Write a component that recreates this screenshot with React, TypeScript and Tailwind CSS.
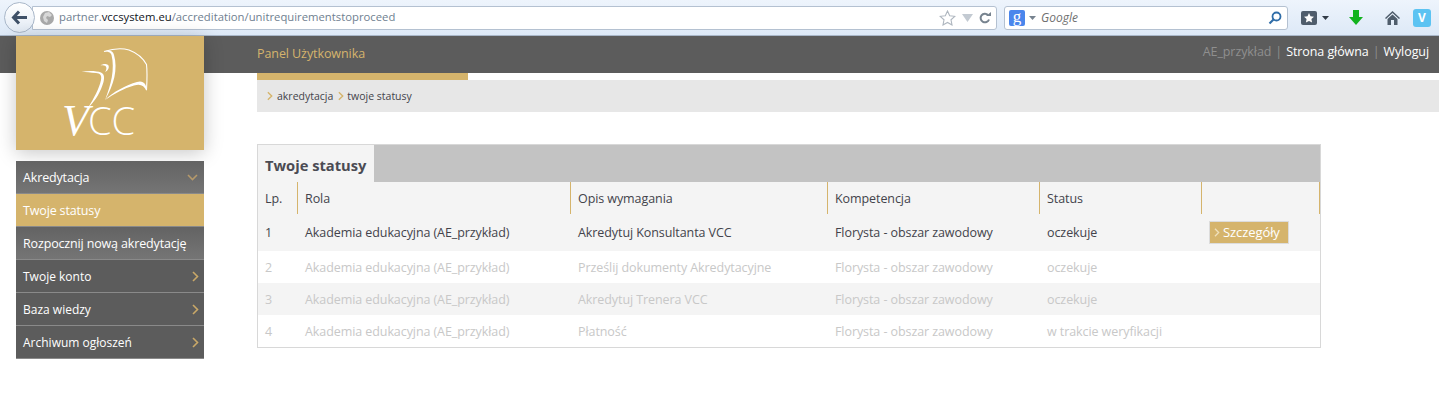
import React from "react";

const grid = "grid grid-cols-[39px_273px_257px_212px_162px_119px]";
const body = "text-[12.5px] tracking-[-0.08px]";

function Chevron({ className = "" }: { className?: string }) {
  return (
    <svg width="7" height="11" viewBox="0 0 7 11" className={className} fill="none">
      <path d="M1 1l4.500 4.500L1 10" stroke="currentColor" strokeWidth="1.600" />
    </svg>
  );
}

function Logo() {
  return (
    <svg width="120" height="105" viewBox="-10 0 120 105" className="block" fill="none">
      <path d="M44 6.500C52 4 62 3 69 5C77 8 83 13 86.500 19.500C87.500 28 87 37 86.500 45" stroke="#fff" strokeWidth="1.100" />
      <path d="M44 6.500C50 4.500 53 6 54 10C58 24 54 40 45 55C51 40 55 24 51.500 10C50.500 7 48 6.500 44 6.500Z" fill="#fff" />
      <path d="M45 55C53 47 66 40 77 37C83 35 87 39 86.500 46C84 40 80 38.500 74 40.500C64 43.500 54 48.500 45 55Z" fill="#fff" />
      <path d="M21.500 27C28 25.500 37 26 41 27.500C44.500 29 44.500 33 43.500 37C41 46 36 55 28 63C34 53 39 44 41 35C42 30 40 28.500 36 28C31 27.500 26 27 21.500 27Z" fill="#fff" />
      <path d="M40.500 20.500C43 18.500 47 18.500 48.500 20.500C49.500 23 47.500 26 45 27C46.500 25 47 22.500 45.500 21C44 20 42 20 40.500 20.500Z" fill="#fff" />
      <text x="2" y="90" fill="#fff" fontFamily="'Open Sans', sans-serif" fontWeight="300" fontSize="38">
        <tspan fontFamily="'Liberation Serif', serif" fontStyle="italic" fontSize="44">V</tspan>
        <tspan dx="-1">CC</tspan>
      </text>
    </svg>
  );
}

function MenuItem({
  label,
  tone,
  small,
  icon,
}: {
  label: string;
  tone: string;
  small?: boolean;
  icon?: React.ReactNode;
}) {
  return (
    <div className={`flex items-center justify-between pl-[7px] pr-[5px] h-[33px] border-b border-[#8a8a8a] text-white ${tone} ${small ? "text-[12px]" : "text-[12.5px] tracking-[-0.15px]"}`}>
      <span className="pt-[2px]">{label}</span>
      {icon}
    </div>
  );
}

function Row({ cells, active, bg, btn }: { cells: string[]; active?: boolean; bg: string; btn?: boolean }) {
  return (
    <div className={`${grid} ${active ? "h-[37px] text-[#43434b]" : "h-[32px] text-[#c8c8c8]"} ${bg} ${body}`}>
      {cells.map((c, i) => (
        <div key={i} className={`flex items-center pt-[2px] ${i === 0 ? "pl-[7px]" : "pl-[8px]"}`}>{c}</div>
      ))}
      <div className="pl-[8px]">
        {btn && (
          <div className="mt-[7px] flex items-center gap-[3px] w-[80px] h-[23px] bg-[#d5b46c] border border-[#dcdcdc] text-white pl-[4px] text-[13px]">
            <Chevron className="text-[#efe0bc] w-[6px] h-[9px]" />
            <span>Szczegóły</span>
          </div>
        )}
      </div>
    </div>
  );
}

export default function App() {
  const role = "Akademia edukacyjna (AE_przykład)";
  const comp = "Florysta - obszar zawodowy";
  return (
    <div className="w-[1439px] h-[409px] overflow-hidden bg-white font-['Open_Sans',sans-serif] text-[#43434b]">
      {/* browser toolbar */}
      <div className="h-[36px] flex items-center bg-gradient-to-b from-[#eef4fc] to-[#dde9f7] border-b border-[#a9b7c9] pl-[4px] pr-[8px]">
        <div className="relative z-10 w-[31px] h-[31px] rounded-full bg-gradient-to-b from-white to-[#e3ebf5] border border-[#a9b7c9] flex items-center justify-center shrink-0">
          <svg width="17" height="15" viewBox="0 0 17 15" fill="none">
            <path d="M8 1.500L2.500 7.500L8 13.500M3 7.500H16" stroke="#3f5168" strokeWidth="3" />
          </svg>
        </div>
        <div className="-ml-[3px] w-[965px] h-[24px] bg-white border border-[#b4c1d1] rounded-r-[3px] flex items-center pl-[7px] pr-[5px] text-[11.3px] text-[#6f8090] shrink-0">
          <svg width="14" height="14" viewBox="0 0 14 14" className="shrink-0 mr-[5px]">
            <circle cx="7" cy="7" r="7" fill="#a9a9a9" />
            <path d="M5 2l4-1 3 3-2 2-3-1-1 2 2 2-1 3-3-2-1-4z" fill="#d8d8d8" />
          </svg>
          <span>
            partner.<span className="text-[#10151c]">vccsystem.eu</span>/accreditation/unitrequirementstoproceed
          </span>
          <div className="ml-auto flex items-center gap-[6px]">
            <svg width="17" height="16" viewBox="0 0 17 16" fill="none">
              <path d="M8.500 1l2.200 4.700 5.100.6-3.800 3.500 1 5.100-4.500-2.500-4.500 2.500 1-5.100L1.200 6.300l5.100-.6z" stroke="#aeb6bf" strokeWidth="1.100" />
            </svg>
            <svg width="11" height="8" viewBox="0 0 11 8"><path d="M0 0h11L5.500 8z" fill="#c3cad2" /></svg>
            <svg width="12" height="12" viewBox="0 0 12 12" fill="none">
              <path d="M10 7.500A4.300 4.300 0 1 1 9 3" stroke="#77838f" strokeWidth="2" />
              <path d="M7 4h5V0z" fill="#77838f" />
            </svg>
          </div>
        </div>
        <div className="ml-[7px] w-[284px] h-[24px] bg-white border border-[#b4c1d1] rounded-[3px] flex items-center pl-[4px] pr-[5px] shrink-0">
          <div className="w-[16px] h-[16px] bg-[#4a86ec] rounded-[2px] text-white text-[17px] leading-[13px] text-center font-['Liberation_Serif',serif]">g</div>
          <svg width="7" height="4" viewBox="0 0 7 4" className="ml-[4px]"><path d="M0 0h7L3.500 4z" fill="#77838f" /></svg>
          <span className="ml-[5px] italic text-[12px] text-[#707070]">Google</span>
          <svg width="14" height="14" viewBox="0 0 14 14" fill="none" className="ml-auto">
            <circle cx="8.500" cy="5.500" r="4" stroke="#2f6da8" strokeWidth="1.800" />
            <path d="M5.500 8.500L1.500 12.500" stroke="#2f6da8" strokeWidth="2.200" />
          </svg>
        </div>
        <div className="ml-[13px] w-[16px] h-[14px] rounded-[2px] bg-[#4f5d6c] flex items-center justify-center shrink-0">
          <svg width="10" height="10" viewBox="0 0 10 10"><path d="M5 0l1.500 3.300 3.500.4-2.600 2.400.7 3.500L5 7.900 1.900 9.600l.7-3.500L0 3.700l3.500-.4z" fill="#fff" /></svg>
        </div>
        <svg width="7" height="4" viewBox="0 0 7 4" className="ml-[5px] shrink-0"><path d="M0 0h7L3.500 4z" fill="#333c47" /></svg>
        <svg width="14" height="15" viewBox="0 0 14 15" className="ml-[20px] shrink-0"><path d="M4 0h6v7h4l-7 8-7-8h4z" fill="#12b31e" /></svg>
        <svg width="15" height="14" viewBox="0 0 15 14" className="ml-[22px] shrink-0">
          <path d="M7.500 0L15 7l-1 1-6.500-6L1 8 0 7z" fill="#4f5d6c" />
          <path d="M2.500 8l5-4.500 5 4.500v6H9V9H6v5H2.500z" fill="#4f5d6c" />
        </svg>
        <div className="ml-[13px] w-[18px] h-[18px] rounded-[3px] bg-[#5cc3f2] text-white text-[12px] font-bold leading-[18px] text-center shrink-0">V</div>
      </div>

      {/* page header */}
      <div className={`h-[37px] bg-[#5c5c5c] flex items-center justify-between pl-[257px] pr-[10px] ${body}`}>
        <span className="text-[#d5b46c]">Panel Użytkownika</span>
        <div className="flex items-center gap-[4px] text-white pb-[4px]">
          <span className="text-[#8f8f8f]">AE_przykład</span>
          <span className="text-[#8f8f8f]">|</span>
          <span>Strona główna</span>
          <span className="text-[#8f8f8f]">|</span>
          <span>Wyloguj</span>
        </div>
      </div>

      <div className="flex items-start">
        {/* sidebar */}
        <div className="relative z-10 -mt-[37px] ml-[16px] w-[188px] shrink-0">
          <div className="h-[114px] bg-[#d5b46c] shadow-[0_3px_18px_rgba(0,0,0,0.22)] pt-[9px] pl-[34px]">
            <Logo />
          </div>
          <div className="mt-[11px]">
            <MenuItem
              label="Akredytacja"
              tone="bg-gradient-to-b from-[#636363] to-[#757575]"
              icon={<Chevron className="text-[#b5996a] rotate-90 mr-[3px]" />}
            />
            <MenuItem label="Twoje statusy" tone="bg-[#d5b46c]" />
            <MenuItem label="Rozpocznij nową akredytację" tone="bg-gradient-to-b from-[#636363] to-[#757575]" />
            <MenuItem label="Twoje konto" small tone="bg-[#5c5c5c]" icon={<Chevron className="text-[#c9a868]" />} />
            <MenuItem label="Baza wiedzy" small tone="bg-[#5c5c5c]" icon={<Chevron className="text-[#c9a868]" />} />
            <MenuItem label="Archiwum ogłoszeń" small tone="bg-[#5c5c5c]" icon={<Chevron className="text-[#c9a868]" />} />
          </div>
        </div>

        {/* main */}
        <div className="ml-[53px] flex-1">
          <div className="h-[7px] w-[211px] bg-[#d5b46c]" />
          <div className="h-[32px] bg-[#e7e7e7] flex items-center pl-[10px] text-[10.5px] text-[#43434b]">
            <Chevron className="text-[#d5b46c] w-[6px] h-[10px] mr-[4px]" />
            <span className="pt-[2px]">akredytacja</span>
            <Chevron className="text-[#d5b46c] w-[6px] h-[10px] ml-[5px] mr-[3px]" />
            <span className="pt-[2px]">twoje statusy</span>
          </div>

          <div className="mt-[32px] w-[1064px] border border-[#d8d8d8]">
            <div className="h-[37px] bg-[#c3c3c3] flex">
              <div className="w-[116px] bg-[#f4f4f4] flex items-center pl-[7px] pt-[3px] text-[14.7px] font-bold text-[#4b4b53]">
                Twoje statusy
              </div>
            </div>
            <div className={`${grid} h-[32px] bg-[#f4f4f4] ${body}`}>
              {["Lp.", "Rola", "Opis wymagania", "Kompetencja", "Status", ""].map((t, i) => (
                <div key={i} className={`flex items-center pt-[2px] ${i > 0 ? "border-l border-[#d5b46c] pl-[7px]" : "pl-[7px]"} ${i === 5 ? "border-r" : ""}`}>
                  {t}
                </div>
              ))}
            </div>
            <Row active bg="bg-[#f4f4f4]" btn cells={["1", role, "Akredytuj Konsultanta VCC", comp, "oczekuje"]} />
            <Row bg="bg-white" cells={["2", role, "Prześlij dokumenty Akredytacyjne", comp, "oczekuje"]} />
            <Row bg="bg-[#f4f4f4]" cells={["3", role, "Akredytuj Trenera VCC", comp, "oczekuje"]} />
            <Row bg="bg-white" cells={["4", role, "Płatność", comp, "w trakcie weryfikacji"]} />
          </div>
        </div>
      </div>
    </div>
  );
}
